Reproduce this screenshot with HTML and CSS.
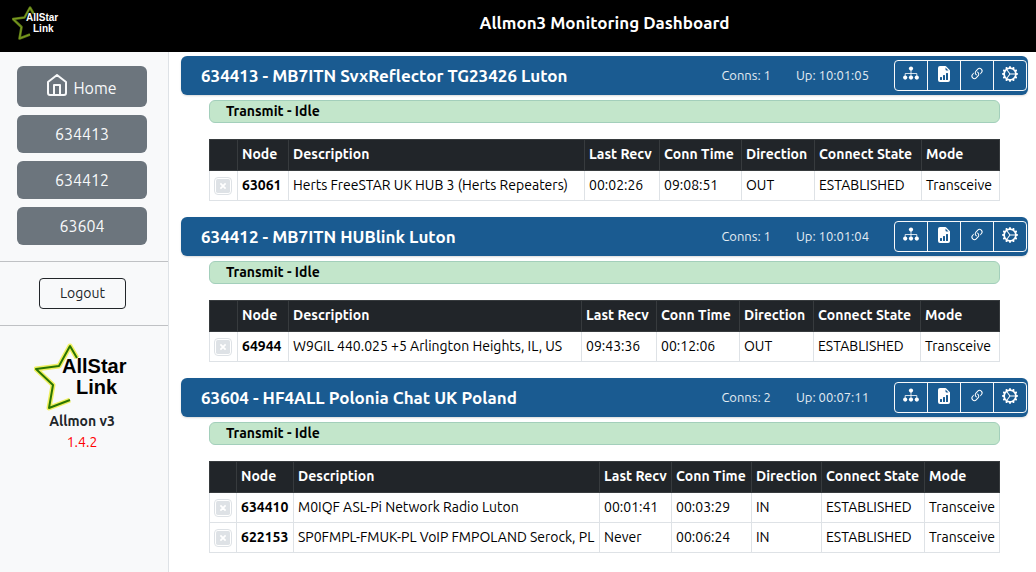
FILE: index.html
```
<!DOCTYPE html>
<html lang="en">

<head>
  <meta charset="utf-8">
  <meta name="viewport" content="width=device-width, initial-scale=1">
  <title>Allmon3 Monitoring Dashboard</title>
  <link rel="stylesheet" href="styles.css">
</head>

<body>
  <!-- Shared icons -->
  <svg class="icon-defs" aria-hidden="true">
    <symbol id="i-map" viewBox="0 0 16 16">
      <circle cx="8" cy="2.6" r="2.1" />
      <path d="M8 4v7M2.2 11V7.5h11.6V11" fill="none" stroke="currentColor" stroke-width=".8" />
      <circle cx="2.2" cy="11.6" r="2.1" />
      <circle cx="8" cy="11.6" r="2.1" />
      <circle cx="13.8" cy="11.6" r="2.1" />
    </symbol>
    <symbol id="i-stats" viewBox="0 0 16 16">
      <path fill-rule="evenodd" d="M9.293 0H4a2 2 0 0 0-2 2v12a2 2 0 0 0 2 2h8a2 2 0 0 0 2-2V4.707A1 1 0 0 0 13.707 4L10 .293A1 1 0 0 0 9.293 0zM9.5 3.5v-2l3 3h-2a1 1 0 0 1-1-1zM10 13.5a.5.5 0 0 0 .5.5h1a.5.5 0 0 0 .5-.5v-6a.5.5 0 0 0-.5-.5h-1a.5.5 0 0 0-.5.5v6zm-2.5.5a.5.5 0 0 1-.5-.5v-4a.5.5 0 0 1 .5-.5h1a.5.5 0 0 1 .5.5v4a.5.5 0 0 1-.5.5h-1zm-3 0a.5.5 0 0 1-.5-.5v-2a.5.5 0 0 1 .5-.5h1a.5.5 0 0 1 .5.5v2a.5.5 0 0 1-.5.5h-1z" />
    </symbol>
    <symbol id="i-link" viewBox="0 0 16 16">
      <path d="M4.715 6.542 3.343 7.914a3 3 0 1 0 4.243 4.243l1.828-1.829A3 3 0 0 0 8.586 5.5L8 6.086a1.002 1.002 0 0 0-.154.199 2 2 0 0 1 .861 3.337L6.88 11.45a2 2 0 1 1-2.83-2.83l.793-.792a4.018 4.018 0 0 1-.128-1.287z" />
      <path d="M6.586 4.672A3 3 0 0 0 7.414 9.5l.775-.776a2 2 0 0 1-.896-3.346L9.12 3.55a2 2 0 1 1 2.83 2.83l-.793.792c.112.42.155.855.128 1.287l1.372-1.372a3 3 0 1 0-4.243-4.243L6.586 4.672z" />
    </symbol>
    <symbol id="i-gear" viewBox="0 0 16 16">
      <path d="M7.068.727c.243-.97 1.62-.97 1.864 0l.071.286a.96.96 0 0 0 1.622.434l.205-.211c.695-.719 1.888-.03 1.613.931l-.08.284a.96.96 0 0 0 1.187 1.187l.283-.081c.96-.275 1.65.918.931 1.613l-.211.205a.96.96 0 0 0 .434 1.622l.286.071c.97.243.97 1.62 0 1.864l-.286.071a.96.96 0 0 0-.434 1.622l.211.205c.719.695.03 1.888-.931 1.613l-.284-.08a.96.96 0 0 0-1.187 1.187l.081.283c.275.96-.918 1.65-1.613.931l-.205-.211a.96.96 0 0 0-1.622.434l-.071.286c-.243.97-1.62.97-1.864 0l-.071-.286a.96.96 0 0 0-1.622-.434l-.205.211c-.695.719-1.888.03-1.613-.931l.08-.284a.96.96 0 0 0-1.186-1.187l-.284.081c-.96.275-1.65-.918-.931-1.613l.211-.205a.96.96 0 0 0-.434-1.622l-.286-.071c-.97-.243-.97-1.62 0-1.864l.286-.071a.96.96 0 0 0 .434-1.622l-.211-.205c-.719-.695-.03-1.888.931-1.613l.284.08a.96.96 0 0 0 1.187-1.186l-.081-.284c-.275-.96.918-1.65 1.613-.931l.205.211a.96.96 0 0 0 1.622-.434l.071-.286zM12.973 8.5H8.25l-2.834 3.779A4.998 4.998 0 0 0 12.973 8.5zm0-1a4.998 4.998 0 0 0-7.557-3.779l2.834 3.78h4.723zM4.617 4.322A4.984 4.984 0 0 0 3.002 8c0 1.455.622 2.765 1.615 3.678L7.375 8 4.617 4.322z" />
    </symbol>
    <symbol id="i-home" viewBox="0 0 20 22">
      <path d="M1 8v11a2 2 0 0 0 2 2h14a2 2 0 0 0 2-2V8l-9-7zM7 21V11h6v10" fill="none" stroke="currentColor" stroke-width="2" stroke-linejoin="round" />
    </symbol>
    <symbol id="i-x" viewBox="0 0 16 16">
      <rect width="16" height="16" rx="2" />
      <path d="M5 5l6 6M11 5l-6 6" stroke="#fff" stroke-width="2" />
    </symbol>
    <symbol id="i-star" viewBox="0 0 96 68">
      <path class="star-glow" d="M43 15L36 3L25 23L2 26L19 42L15 65L36 57" />
      <path class="star-line" d="M43 15L36 3L25 23L2 26L19 42L15 65L36 57" />
    </symbol>
  </svg>

  <header class="topbar">
    <a class="brand" href="#" aria-label="AllStar Link">
      <svg class="logo logo-small" viewBox="0 0 96 68">
        <use href="#i-star" />
        <text x="28" y="30">AllStar</text>
        <text x="42" y="51">Link</text>
      </svg>
    </a>
    <h1 class="page-title">Allmon3 Monitoring Dashboard</h1>
  </header>

  <div class="layout">
    <aside class="sidebar">
      <nav class="menu">
        <a class="menu-btn menu-home" href="#"><svg class="home-icon"><use href="#i-home" /></svg>Home</a>
        <a class="menu-btn" href="#634413">634413</a>
        <a class="menu-btn" href="#634412">634412</a>
        <a class="menu-btn" href="#63604">63604</a>
      </nav>
      <div class="session">
        <button class="logout" type="button">Logout</button>
      </div>
      <div class="about">
        <svg class="logo logo-large" viewBox="0 0 96 68">
          <use href="#i-star" />
          <text x="28" y="30">AllStar</text>
          <text x="42" y="51">Link</text>
        </svg>
        <div class="about-name">Allmon v3</div>
        <div class="about-version">1.4.2</div>
      </div>
    </aside>

    <main class="nodes">
      <section class="node" id="634413">
        <div class="node-bar">
          <h2 class="node-title">634413 - MB7ITN SvxReflector TG23426 Luton</h2>
          <span class="conns">Conns: 1</span>
          <span class="uptime">Up: 10:01:05</span>
          <div class="tools">
            <button class="tool" type="button" aria-label="Node map"><svg class="icon"><use href="#i-map" /></svg></button>
            <button class="tool" type="button" aria-label="Statistics"><svg class="icon"><use href="#i-stats" /></svg></button>
            <button class="tool" type="button" aria-label="Connect"><svg class="icon"><use href="#i-link" /></svg></button>
            <button class="tool" type="button" aria-label="Commands"><svg class="icon"><use href="#i-gear" /></svg></button>
          </div>
        </div>
        <div class="node-body">
          <div class="status">Transmit - Idle</div>
          <table class="conn-table">
            <colgroup>
              <col class="w-act"><col class="w-node"><col><col class="w-recv"><col class="w-time"><col class="w-dir"><col class="w-state"><col class="w-mode">
            </colgroup>
            <thead>
              <tr><th></th><th>Node</th><th>Description</th><th>Last Recv</th><th>Conn Time</th><th>Direction</th><th>Connect State</th><th>Mode</th></tr>
            </thead>
            <tbody>
              <tr>
                <td><button class="drop" type="button" aria-label="Disconnect 63061"><svg class="drop-icon"><use href="#i-x" /></svg></button></td>
                <td class="num">63061</td><td>Herts FreeSTAR UK HUB 3 (Herts Repeaters)</td><td>00:02:26</td><td>09:08:51</td><td>OUT</td><td>ESTABLISHED</td><td>Transceive</td>
              </tr>
            </tbody>
          </table>
        </div>
      </section>

      <section class="node" id="634412">
        <div class="node-bar">
          <h2 class="node-title">634412 - MB7ITN HUBlink Luton</h2>
          <span class="conns">Conns: 1</span>
          <span class="uptime">Up: 10:01:04</span>
          <div class="tools">
            <button class="tool" type="button" aria-label="Node map"><svg class="icon"><use href="#i-map" /></svg></button>
            <button class="tool" type="button" aria-label="Statistics"><svg class="icon"><use href="#i-stats" /></svg></button>
            <button class="tool" type="button" aria-label="Connect"><svg class="icon"><use href="#i-link" /></svg></button>
            <button class="tool" type="button" aria-label="Commands"><svg class="icon"><use href="#i-gear" /></svg></button>
          </div>
        </div>
        <div class="node-body">
          <div class="status">Transmit - Idle</div>
          <table class="conn-table conn-table-wide">
            <colgroup>
              <col class="w-act"><col class="w-node"><col><col class="w-recv"><col class="w-time"><col class="w-dir"><col class="w-state"><col class="w-mode">
            </colgroup>
            <thead>
              <tr><th></th><th>Node</th><th>Description</th><th>Last Recv</th><th>Conn Time</th><th>Direction</th><th>Connect State</th><th>Mode</th></tr>
            </thead>
            <tbody>
              <tr>
                <td><button class="drop" type="button" aria-label="Disconnect 64944"><svg class="drop-icon"><use href="#i-x" /></svg></button></td>
                <td class="num">64944</td><td>W9GIL 440.025 +5 Arlington Heights, IL, US</td><td>09:43:36</td><td>00:12:06</td><td>OUT</td><td>ESTABLISHED</td><td>Transceive</td>
              </tr>
            </tbody>
          </table>
        </div>
      </section>

      <section class="node" id="63604">
        <div class="node-bar">
          <h2 class="node-title">63604 - HF4ALL Polonia Chat UK Poland</h2>
          <span class="conns">Conns: 2</span>
          <span class="uptime">Up: 00:07:11</span>
          <div class="tools">
            <button class="tool" type="button" aria-label="Node map"><svg class="icon"><use href="#i-map" /></svg></button>
            <button class="tool" type="button" aria-label="Statistics"><svg class="icon"><use href="#i-stats" /></svg></button>
            <button class="tool" type="button" aria-label="Connect"><svg class="icon"><use href="#i-link" /></svg></button>
            <button class="tool" type="button" aria-label="Commands"><svg class="icon"><use href="#i-gear" /></svg></button>
          </div>
        </div>
        <div class="node-body">
          <div class="status">Transmit - Idle</div>
          <table class="conn-table conn-table-tight">
            <colgroup>
              <col class="w-act"><col class="w-node"><col><col class="w-recv"><col class="w-time"><col class="w-dir"><col class="w-state"><col class="w-mode">
            </colgroup>
            <thead>
              <tr><th></th><th>Node</th><th>Description</th><th>Last Recv</th><th>Conn Time</th><th>Direction</th><th>Connect State</th><th>Mode</th></tr>
            </thead>
            <tbody>
              <tr>
                <td><button class="drop" type="button" aria-label="Disconnect 634410"><svg class="drop-icon"><use href="#i-x" /></svg></button></td>
                <td class="num">634410</td><td>M0IQF ASL-Pi Network Radio Luton</td><td>00:01:41</td><td>00:03:29</td><td>IN</td><td>ESTABLISHED</td><td>Transceive</td>
              </tr>
              <tr>
                <td><button class="drop" type="button" aria-label="Disconnect 622153"><svg class="drop-icon"><use href="#i-x" /></svg></button></td>
                <td class="num">622153</td><td>SP0FMPL-FMUK-PL VoIP FMPOLAND Serock, PL</td><td>Never</td><td>00:06:24</td><td>IN</td><td>ESTABLISHED</td><td>Transceive</td>
              </tr>
            </tbody>
          </table>
        </div>
      </section>
    </main>
  </div>
</body>

</html>
```
FILE: styles.css
```
* {
  box-sizing: border-box;
}

body {
  margin: 0;
  min-height: 100vh;
  display: flex;
  flex-direction: column;
  font-family: Ubuntu, "Open Sans", "Noto Sans", sans-serif;
  font-size: 14px;
  line-height: 21px;
  color: #212529;
  background-color: #fff;
}

.icon-defs {
  position: absolute;
  width: 0;
  height: 0;
}

/* Top bar */
.topbar {
  display: flex;
  align-items: center;
  height: 52px;
  background-color: #000;
  color: #fff;
}

.brand {
  width: 181px;
  height: 34px;
  margin-bottom: 6px;
  padding-left: 12px;
}

.page-title {
  flex: 1;
  margin: 0;
  padding: 0 8px 6px 0;
  font-size: 17px;
  line-height: 24px;
  font-weight: 600;
  text-align: center;
}

/* AllStar Link logo */
.logo {
  display: block;
  font-family: "Liberation Sans", Arial, sans-serif;
  font-size: 20px;
  font-weight: bold;
}

.logo-small {
  width: 48px;
  height: 34px;
  fill: #fff;
  --star: #7f9f22;
  --glow: #5d7a16;
}

.logo-large {
  width: 96px;
  height: 68px;
  fill: #000;
  --star: #2a7500;
  --glow: #f0f060;
}

.star-line,
.star-glow {
  fill: none;
  stroke-linejoin: round;
}

.star-line {
  stroke: var(--star);
  stroke-width: 2;
}

.star-glow {
  stroke: var(--glow);
  stroke-width: 5;
}

.layout {
  flex: 1;
  display: flex;
}

/* Sidebar */
.sidebar {
  flex: none;
  width: 169px;
  background-color: #f8f9fa;
  border-right: 1px solid #dee2e6;
}

.menu {
  display: flex;
  flex-direction: column;
  gap: 8px;
  padding: 14px 21px 16px 17px;
}

.menu-btn {
  padding: 7px;
  border-radius: 6px;
  background-color: #6c757d;
  color: #f8f9fa;
  font-size: 16px;
  line-height: 24px;
  text-align: center;
  text-decoration: none;
}

.menu-home {
  display: flex;
  justify-content: center;
  align-items: flex-start;
  gap: 6px;
  padding: 10px 6px 7px;
}

.home-icon {
  width: 20px;
  height: 22px;
  margin-top: -2px;
}

.session {
  padding: 16px 42px 16px 39px;
  border-top: 1px solid #bfc1c4;
  border-bottom: 1px solid #bfc1c4;
}

.logout {
  display: block;
  width: 100%;
  padding: 4px;
  border: 1px solid #212529;
  border-radius: 4px;
  background: none;
  color: #212529;
  font: inherit;
}

.about {
  display: flex;
  flex-direction: column;
  align-items: center;
  padding: 17px 4px 0 0;
}

.about-name {
  font-weight: 600;
}

.about-version {
  color: #f00;
}

/* Node panels */
.nodes {
  flex: 1;
  padding: 4px 8px 16px 12px;
}

.node {
  margin-bottom: 16px;
}

.node-bar {
  display: flex;
  align-items: center;
  padding: 4px 1px 4px 20px;
  border-radius: 6px;
  background-color: #1a5b91;
  box-shadow: 0 1px 2px rgba(0, 0, 0, 0.15);
  color: #fff;
}

.node-title {
  flex: 1;
  margin: 0;
  font-size: 17px;
  line-height: 24px;
  font-weight: 600;
}

.conns,
.uptime {
  margin-right: 25px;
  font-size: 13px;
  color: #e4ecf3;
}

.tools {
  display: flex;
}

.tool {
  display: flex;
  justify-content: center;
  align-items: center;
  width: 34px;
  height: 31px;
  padding: 0 0 3px;
  border: 1px solid #f8f9fa;
  background: none;
  color: #fff;
}

.tool + .tool {
  margin-left: -1px;
}

.tool:first-child {
  border-radius: 4px 0 0 4px;
}

.tool:last-child {
  border-radius: 0 4px 4px 0;
}

.icon {
  width: 16px;
  height: 16px;
  fill: currentColor;
}

.node-body {
  padding: 5px 28px 0;
}

.status {
  margin-bottom: 16px;
  padding-left: 16px;
  border: 1px solid #a3cfbb;
  border-radius: 6px;
  background-color: #c3e6cb;
  color: #000;
  font-weight: 600;
}

/* Connection tables */
.conn-table {
  width: 100%;
  table-layout: fixed;
  border-collapse: collapse;
  color: #000;
  white-space: nowrap;
}

.conn-table th,
.conn-table td {
  height: 30px;
  padding: 0 4px;
  border: 1px solid #dee2e6;
  text-align: left;
}

.conn-table th {
  height: 31px;
  padding-bottom: 2px;
  border-color: #373b3e;
  background-color: #212529;
  color: #fff;
  font-weight: 600;
}

.conn-table .num {
  font-weight: 600;
}

.w-act { width: 28px; }
.w-node { width: 51px; }
.w-recv { width: 75px; }
.w-time { width: 82px; }
.w-dir { width: 73px; }
.w-state { width: 107px; }
.w-mode { width: 78px; }

.conn-table-wide .w-time { width: 83px; }
.conn-table-wide .w-dir { width: 74px; }
.conn-table-wide .w-mode { width: 79px; }

.conn-table-tight .w-act { width: 27px; }
.conn-table-tight .w-node { width: 57px; }
.conn-table-tight .w-recv { width: 72px; }
.conn-table-tight .w-time { width: 80px; }
.conn-table-tight .w-dir { width: 70px; }
.conn-table-tight .w-state { width: 103px; }
.conn-table-tight .w-mode { width: 75px; }

.drop {
  display: block;
  padding: 1px;
  border: 1px solid #dee2e6;
  border-radius: 4px;
  background: none;
}

.drop-icon {
  display: block;
  width: 14px;
  height: 14px;
  fill: #dee2e6;
}
```
